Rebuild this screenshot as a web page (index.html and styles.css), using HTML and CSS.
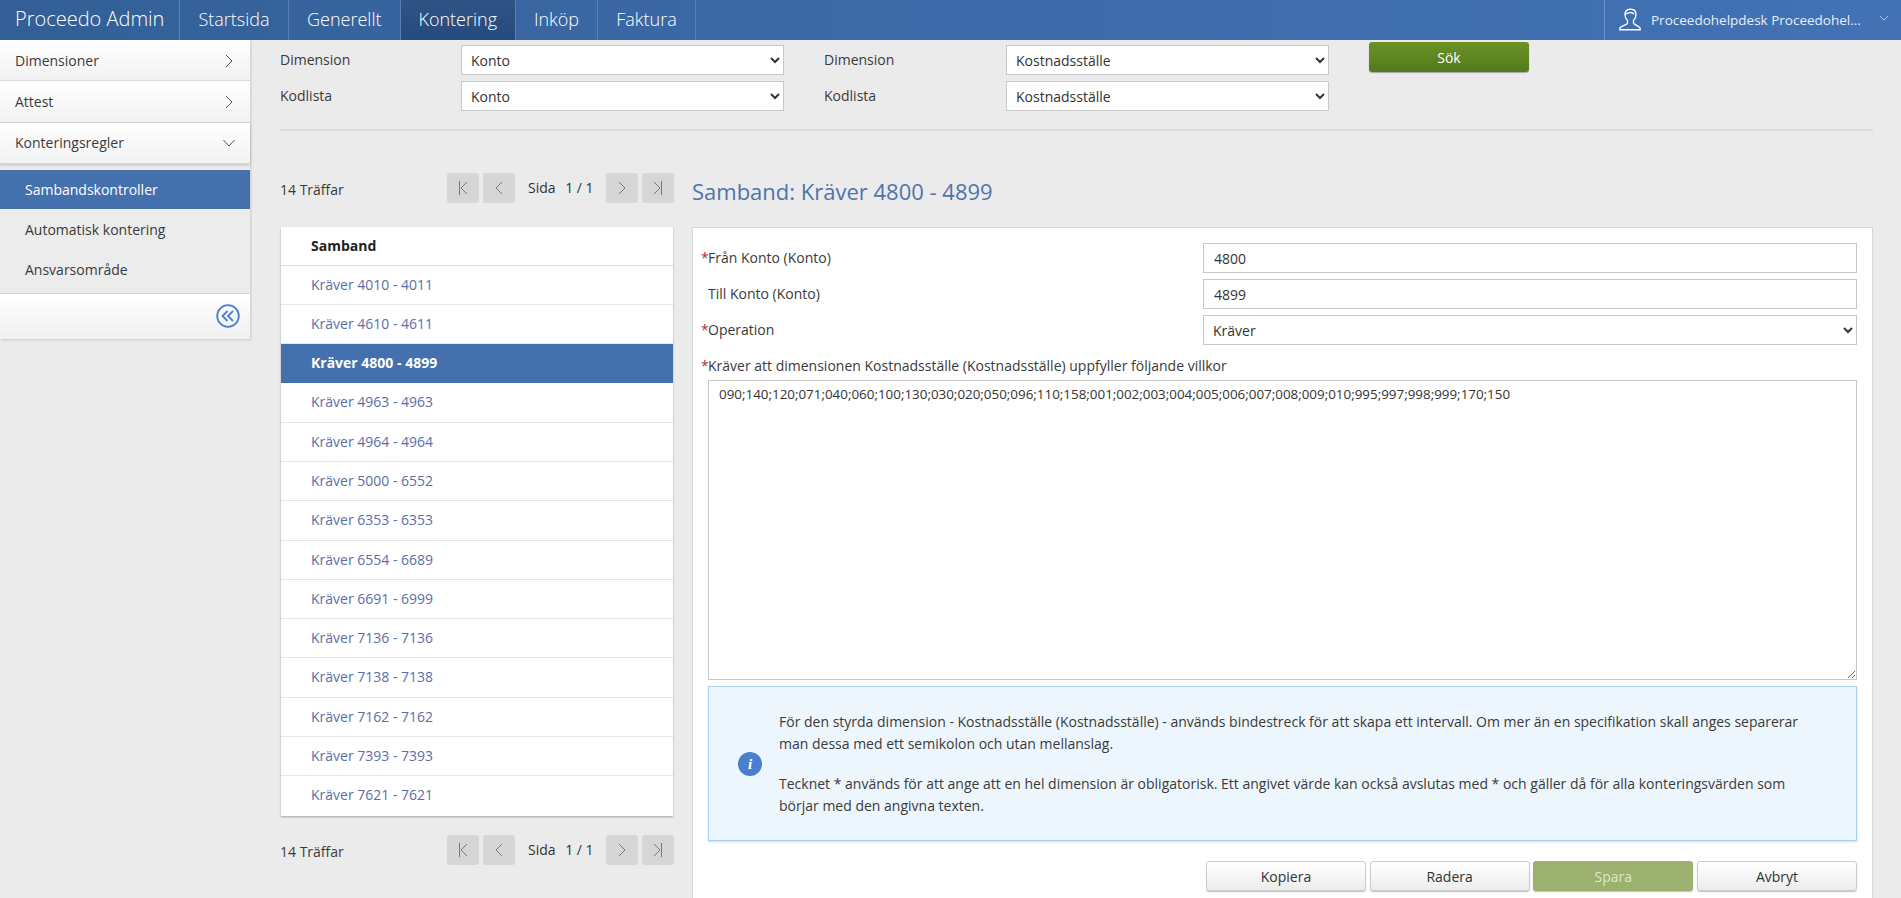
FILE: index.html
```html
<!DOCTYPE html>
<html lang="sv">
<head>
<meta charset="utf-8">
<title>Proceedo Admin</title>
<link rel="stylesheet" href="styles.css">
</head>
<body>
<svg class="defs" width="0" height="0" aria-hidden="true">
  <symbol id="i-right" viewBox="0 0 12 16"><path d="M3 2l6 6-6 6" fill="none" stroke="currentColor" stroke-width="1"/></symbol>
  <symbol id="i-left" viewBox="0 0 12 16"><path d="M9 2L3 8l6 6" fill="none" stroke="currentColor" stroke-width="1"/></symbol>
  <symbol id="i-first" viewBox="0 0 12 16"><path d="M2.5 1v14M10 2L4 8l6 6" fill="none" stroke="currentColor" stroke-width="1"/></symbol>
  <symbol id="i-last" viewBox="0 0 12 16"><path d="M9.5 1v14M2 2l6 6-6 6" fill="none" stroke="currentColor" stroke-width="1"/></symbol>
</svg>
<div class="app">
  <header class="topbar">
    <div class="brand">Proceedo Admin</div>
    <nav class="tabs">
      <a class="tab tab-start">Startsida</a>
      <a class="tab tab-general">Generellt</a>
      <a class="tab tab-active">Kontering</a>
      <a class="tab tab-buy">Inköp</a>
      <a class="tab tab-invoice">Faktura</a>
    </nav>
    <div class="user">
      <svg class="user-icon" viewBox="0 0 24 24"><path d="M12 1.2c-3 0-5 2.200-5 5.300 0 2.500 1 4.700 2.500 6v2.200c0 .8-.6 1.400-1.800 2L3.400 18.600c-1.200.6-1.600 1.500-1.600 2.600v.6h20.400v-.6c0-1.100-.4-2-1.600-2.600l-3.300-1.900c-1.200-.6-1.800-1.200-1.800-2v-2.200c1.500-1.300 2.500-3.500 2.500-6 0-3.100-2-5.300-5-5.300z M8 6c1.500-1.500 6-2.300 8 0" fill="none" stroke="#fff" stroke-width="1.400"/></svg>
      <span class="user-name">Proceedohelpdesk Proceedohel...</span>
      <svg class="user-caret" viewBox="0 0 12 8"><path d="M1 1l5 5 5-5" fill="none" stroke="currentColor" stroke-width="1"/></svg>
    </div>
  </header>
  <div class="body">
    <aside class="sidebar">
      <div class="side-head"><span>Dimensioner</span><svg class="side-chev"><use href="#i-right"/></svg></div>
      <div class="side-head"><span>Attest</span><svg class="side-chev"><use href="#i-right"/></svg></div>
      <div class="side-head side-open"><span>Konteringsregler</span><svg class="side-down" viewBox="0 0 14 8"><path d="M1.500 1l5.500 6 5.500-6" fill="none" stroke="currentColor" stroke-width="1"/></svg></div>
      <ul class="side-list">
        <li class="side-item side-item-active">Sambandskontroller</li>
        <li class="side-item">Automatisk kontering</li>
        <li class="side-item">Ansvarsområde</li>
      </ul>
      <div class="side-foot">
        <svg class="collapse" viewBox="0 0 24 24"><circle cx="12" cy="12" r="10.800" fill="none" stroke="#4a7fd0" stroke-width="1.800"/><path d="M11.500 7l-5 5 5 5M17 7l-5 5 5 5" fill="none" stroke="#4a7fd0" stroke-width="1.800"/></svg>
      </div>
    </aside>
    <main class="main">
      <section class="filters">
        <div class="filter-grid">
          <label class="f-label">Dimension</label>
          <select class="f-select"><option>Konto</option></select>
          <label class="f-label">Dimension</label>
          <select class="f-select"><option>Kostnadsställe</option></select>
          <label class="f-label">Kodlista</label>
          <select class="f-select"><option>Konto</option></select>
          <label class="f-label">Kodlista</label>
          <select class="f-select"><option>Kostnadsställe</option></select>
        </div>
        <button class="search">Sök</button>
      </section>
      <div class="columns">
        <div class="left">
          <div class="pager">
            <span class="hits">14 Träffar</span>
            <div class="pager-ctl">
              <span class="pg"><svg class="pg-i"><use href="#i-first"/></svg></span>
              <span class="pg"><svg class="pg-i"><use href="#i-left"/></svg></span>
              <span class="page-text">Sida <b>1 / 1</b></span>
              <span class="pg"><svg class="pg-i"><use href="#i-right"/></svg></span>
              <span class="pg"><svg class="pg-i"><use href="#i-last"/></svg></span>
            </div>
          </div>
          <div class="list">
            <div class="list-head">Samband</div>
            <a class="row">Kräver 4010 - 4011</a>
            <a class="row">Kräver 4610 - 4611</a>
            <a class="row row-active">Kräver 4800 - 4899</a>
            <a class="row">Kräver 4963 - 4963</a>
            <a class="row">Kräver 4964 - 4964</a>
            <a class="row">Kräver 5000 - 6552</a>
            <a class="row">Kräver 6353 - 6353</a>
            <a class="row">Kräver 6554 - 6689</a>
            <a class="row">Kräver 6691 - 6999</a>
            <a class="row">Kräver 7136 - 7136</a>
            <a class="row">Kräver 7138 - 7138</a>
            <a class="row">Kräver 7162 - 7162</a>
            <a class="row">Kräver 7393 - 7393</a>
            <a class="row">Kräver 7621 - 7621</a>
          </div>
          <div class="pager pager-bottom">
            <span class="hits">14 Träffar</span>
            <div class="pager-ctl">
              <span class="pg"><svg class="pg-i"><use href="#i-first"/></svg></span>
              <span class="pg"><svg class="pg-i"><use href="#i-left"/></svg></span>
              <span class="page-text">Sida <b>1 / 1</b></span>
              <span class="pg"><svg class="pg-i"><use href="#i-right"/></svg></span>
              <span class="pg"><svg class="pg-i"><use href="#i-last"/></svg></span>
            </div>
          </div>
        </div>
        <div class="right">
          <h1 class="title">Samband: Kräver 4800 - 4899</h1>
          <div class="panel">
            <div class="form-row">
              <label class="p-label"><i class="req">*</i>Från Konto (Konto)</label>
              <input class="p-input" value="4800">
            </div>
            <div class="form-row">
              <label class="p-label"><i class="req req-off">*</i>Till Konto (Konto)</label>
              <input class="p-input" value="4899">
            </div>
            <div class="form-row">
              <label class="p-label"><i class="req">*</i>Operation</label>
              <select class="p-input p-select"><option>Kräver</option></select>
            </div>
            <label class="p-label p-wide"><i class="req">*</i>Kräver att dimensionen Kostnadsställe (Kostnadsställe) uppfyller följande villkor</label>
            <textarea class="p-area">090;140;120;071;040;060;100;130;030;020;050;096;110;158;001;002;003;004;005;006;007;008;009;010;995;997;998;999;170;150</textarea>
            <div class="info">
              <svg class="info-i" viewBox="0 0 24 24"><circle cx="12" cy="12" r="12" fill="#4a7fd0"/><text x="12" y="17" text-anchor="middle" class="info-glyph">i</text></svg>
              <div class="info-text">
                <p>För den styrda dimension - Kostnadsställe (Kostnadsställe) - används bindestreck för att skapa ett intervall. Om mer än en specifikation skall anges separerar man dessa med ett semikolon och utan mellanslag.</p>
                <p>Tecknet * används för att ange att en hel dimension är obligatorisk. Ett angivet värde kan också avslutas med * och gäller då för alla konteringsvärden som börjar med den angivna texten.</p>
              </div>
            </div>
            <div class="actions">
              <button class="btn">Kopiera</button>
              <button class="btn">Radera</button>
              <button class="btn btn-primary">Spara</button>
              <button class="btn">Avbryt</button>
            </div>
          </div>
        </div>
      </div>
    </main>
  </div>
</div>
</body>
</html>
```
FILE: styles.css
```css
* { box-sizing: border-box; }
html, body { margin: 0; height: 100%; overflow: hidden; }
body { font: 14px/18px "Open Sans", sans-serif; color: #333; background: #ebebeb; }
.defs { position: absolute; }
.app { height: 898px; display: flex; flex-direction: column; }

.topbar { height: 40px; flex: none; display: flex; color: #fff;
  background: linear-gradient(90deg, #335f96 0%, #3c69a6 40%, #4272b5 100%); }
.brand { width: 179px; flex: none; padding-left: 15px; font-size: 20px; font-weight: 300; line-height: 38px; }
.tabs { display: flex; border-left: 1px solid #5580b8; }
.tab { font-size: 18px; font-weight: 300; line-height: 38px; text-align: center; border-right: 1px solid #5580b8; }
.tab-start { width: 109px; }
.tab-general { width: 111.500px; }
.tab-active { width: 115.500px; background: linear-gradient(#2f5486, #274a7c); }
.tab-buy { width: 82px; }
.tab-invoice { width: 98px; }
.user { margin-left: auto; width: 297px; display: flex; align-items: center; border-left: 1px solid #6b90c6; padding-left: 13px; color: #fff; }
.user-icon { width: 24px; height: 24px; flex: none; }
.user-name { margin-left: 9px; font-size: 13.500px; width: 228px; flex: none; white-space: nowrap; color: #e6eefa; }
.user-caret { width: 10px; height: 7px; flex: none; margin: -4px 0 0 0; color: #c5d6f0; }

.body { flex: 1; display: flex; min-height: 0; }
.sidebar { width: 250px; flex: none; align-self: flex-start; box-shadow: 1px 1px 2px rgba(0,0,0,.15); }
.side-head { height: 41.300px; display: flex; align-items: center; justify-content: space-between; padding: 1px 15px 0;
  background: linear-gradient(#fff, #f2f2f2); border-bottom: 1px solid #d8d8d8; color: #3a3a3a; }
.side-chev { width: 12px; height: 16px; color: #555; }
.side-down { width: 14px; height: 8px; color: #555; margin-right: -1px; }
.side-open { box-shadow: 0 1px 3px rgba(0,0,0,.2); position: relative; }
.side-list { list-style: none; margin: 0; padding: 6.100px 0 3px; background: #ececec; height: 129.100px; }
.side-item { height: 40px; line-height: 41px; padding-left: 25px; color: #3a3a3a; }
.side-item-active { background: #4471ae; color: #fff; height: 39px; line-height: 39px; }
.side-foot { height: 46px; display: flex; justify-content: flex-end; align-items: center; padding-right: 10px;
  border-top: 1px solid #d4d4d4; background: linear-gradient(#fff, #f0f0f0); }
.collapse { width: 24px; height: 24px; }

.main { flex: 1; min-width: 0; padding: 0 28px 0 30px; display: flex; flex-direction: column; }
.filters { height: 91px; border-bottom: 2px solid #dcdcdc; display: flex; align-items: flex-start; }
.filter-grid { display: grid; grid-template-columns: 181px 323px 222px 323px; grid-auto-rows: 30px; row-gap: 6px; padding-top: 5px; margin-right: 40px; }
.f-label { line-height: 29px; color: #3a3a3a; }
.f-label:nth-child(3), .f-label:nth-child(7) { padding-left: 40px; }
.f-select { height: 30px; border: 1px solid #c8c8c8; background: #fff; font: 14px "Open Sans", sans-serif; color: #333; padding: 0 5px; border-radius: 0; }
.search { margin-top: 2px; width: 160px; height: 30px; border: 0; border-radius: 3px; color: #fff; font: 14px "Open Sans", sans-serif;
  background: linear-gradient(#6c9228, #537a1b); box-shadow: 0 1px 1px rgba(0,0,0,.3); }

.columns { display: flex; flex: 1; min-height: 0; margin-top: 42px; }
.left { width: 394px; flex: none; }
.pager { height: 30px; display: flex; justify-content: space-between; align-items: center; }
.hits { color: #3a3a3a; padding-top: 4px; }
.pager-ctl { display: flex; align-items: center; gap: 4px; }
.pg { width: 32px; height: 30px; background: #d6d6d6; border-radius: 3px; display: flex; align-items: center; justify-content: center; color: #777; }
.pg-i { width: 12px; height: 16px; }
.page-text { width: 83px; padding-left: 9px; color: #333; white-space: nowrap; }
.page-text b { font-weight: 400; margin-left: 6px; }
.list { margin: 24px 0 0 1px; width: 392px; background: #fff; box-shadow: 0 1px 2px rgba(0,0,0,.3); }
.list-head { height: 38.500px; line-height: 37px; padding-left: 30px; font-weight: 700; color: #222; border-bottom: 1px solid #ddd; }
.row { display: block; height: 39.300px; line-height: 38px; padding-left: 30px; color: #5b6ea6; border-bottom: 1px solid #e6e6e6; }
.row-active { background: #4471ae; color: #fff; font-weight: 700; border-bottom-color: #4471ae; }
.row:last-child { border-bottom: 0; }
.pager-bottom { margin-top: 19px; }

.right { flex: 1; min-width: 0; margin-left: 18px; display: flex; flex-direction: column; }
.title { height: 54px; margin: 0; font-size: 22px; line-height: 36px; font-weight: 400; color: #4f73ab; }
.panel { flex: 1; background: #fff; border: 1px solid #d9d9d9; border-bottom: 0; padding: 15px 15px 0 8px; }
.form-row { display: flex; justify-content: space-between; align-items: center; height: 30px; margin-bottom: 6px; }
.p-label { display: block; color: #3a3a3a; }
.req { font-style: normal; color: #b03030; display: inline-block; width: 7px; }
.req-off { visibility: hidden; }
.p-input { width: 654px; height: 30px; border: 1px solid #c8c8c8; background: #fff; padding: 0 10px; font: 14px "Open Sans", sans-serif; color: #333; border-radius: 0; }
.p-select { padding: 0 5px; }
.p-wide { height: 29px; line-height: 29px; }
.p-area { display: block; width: 1149px; height: 300px; margin-left: 7px; border: 1px solid #c8c8c8; padding: 3px 10px; font: 13.400px/20px "Open Sans", sans-serif; color: #333; }
.info { margin: 6px 0 0 7px; width: 1149px; height: 155px; background: #eef6fd; border: 1px solid #a9d0ef; box-shadow: 0 1px 2px rgba(0,0,0,.15);
  display: flex; align-items: center; padding: 0 50px 0 29px; }
.info-i { width: 24px; height: 24px; flex: none; margin-right: 17px; }
.info-glyph { font: italic 700 15px "Liberation Serif", serif; fill: #fff; }
.info-text { font-size: 14px; line-height: 22px; color: #3a3a3a; }
.info-text p { margin: 0 0 18px; }
.info-text p:last-child { margin: 0; }
.actions { margin: 20px 0 0 7px; width: 1149px; display: flex; justify-content: flex-end; gap: 3.700px; }
.btn { width: 160px; height: 30px; border: 1px solid #ccc; border-radius: 3px; background: linear-gradient(#fff, #ececec); font: 14px "Open Sans", sans-serif; color: #333; box-shadow: 0 1px 1px rgba(0,0,0,.25); }
.btn-primary { background: #9cb16f; border-color: #9cb16f; color: #dfe8cc; }
```
